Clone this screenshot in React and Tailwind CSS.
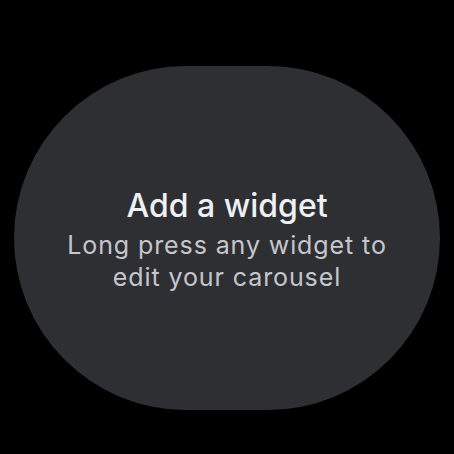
export default function App() {
  return (
    <div className="w-[454px] h-[454px] bg-black pt-[66px] pl-[14px]" style={{ fontFamily: "Inter, Roboto, sans-serif" }}>
      <div className="w-[426px] h-[344px] rounded-full bg-[#2e2f33] flex flex-col items-center justify-center text-center pt-[4px]">
        <div className="text-[32px] leading-[38px] font-medium text-[#eef0f3]">Add a widget</div>
        <div className="mt-[4px] text-[25px] leading-[32px] text-[#c5c7cc] tracking-[0.9px]">
          Long press any widget to
          <br />
          edit your carousel
        </div>
      </div>
    </div>
  );
}
